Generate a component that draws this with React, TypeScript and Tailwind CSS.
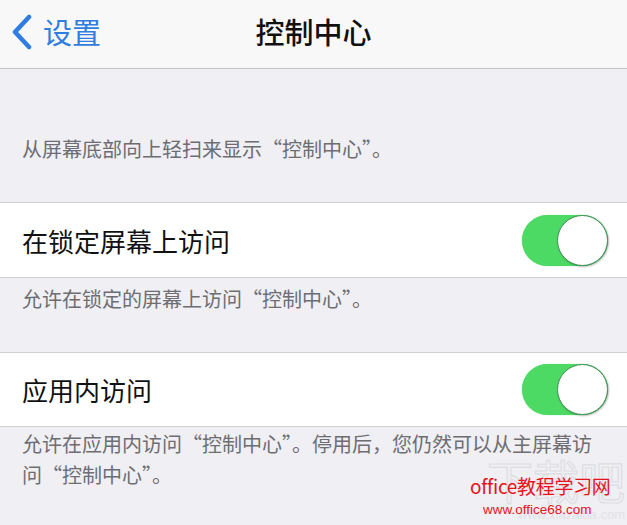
import React from "react";

const cjk = { fontFamily: '"Noto Sans CJK SC", "Noto Sans", sans-serif' };

function Toggle() {
  return (
    <div className="w-[86px] h-[51px] rounded-full bg-[#4cd964] flex items-center justify-end shadow-[0_0_1px_#4cd964]">
      <div className="w-[51px] h-[51px] rounded-full bg-white border-[1.5px] border-[#3f8f55] shadow-[1px_1px_2px_rgba(0,0,0,0.25)]" />
    </div>
  );
}

export default function App() {
  return (
    <div lang="zh-CN" style={cjk} className="relative w-[627px] h-[525px] overflow-hidden bg-[#efeff4]">
      {/* nav bar */}
      <div className="h-[69px] bg-[#f8f8f8] border-b border-[#c4c4c8] grid grid-cols-[1fr_auto_1fr] items-center">
        <div className="flex items-center pl-[10px] gap-[9px] text-[#2f7ddf]">
          <svg width="24" height="36" viewBox="0 0 24 36" className="mt-[-4px]">
            <path d="M19 3 L5 18 L19 33" fill="none" stroke="#2f7ddf" strokeWidth="4.5" strokeLinecap="round" strokeLinejoin="round" />
          </svg>
          <span className="text-[29px] leading-none mt-[-5px]">设置</span>
        </div>
        <div className="text-[29px] leading-none text-[#111] font-medium mt-[-6px]">控制中心</div>
        <div />
      </div>

      {/* section 1 header */}
      <div className="pt-[64px] pb-[37px] px-[22px] text-[20px] leading-[32px] text-[#6d6d72]">
        从屏幕底部向上轻扫来显示“控制中心”。
      </div>

      {/* row 1 */}
      <div className="bg-white border-y border-[#d0d0d4] h-[76px] flex items-center justify-between pl-[22px] pr-[19px]">
        <span className="text-[26px] text-[#111]">在锁定屏幕上访问</span>
        <Toggle />
      </div>

      <div className="pt-[5px] pb-[37px] px-[22px] text-[20px] leading-[32px] text-[#6d6d72]">
        允许在锁定的屏幕上访问“控制中心”。
      </div>

      {/* row 2 */}
      <div className="bg-white border-y border-[#d0d0d4] h-[75px] flex items-center justify-between pl-[22px] pr-[19px]">
        <span className="text-[26px] text-[#111]">应用内访问</span>
        <Toggle />
      </div>

      <div className="pt-[1px] px-[22px] pr-[19px] text-[20px] leading-[31px] text-[#6d6d72]">
        允许在应用内访问“控制中心”。停用后，您仍然可以从主屏幕访问“控制中心”。
      </div>

      {/* faint watermark */}
      <div className="absolute right-[2px] top-[456px] text-[46px] leading-none text-transparent [-webkit-text-stroke:1.2px_#dedee2] pointer-events-none">下载吧</div>
      <div className="absolute right-[2px] top-[508px] text-[13px] leading-none text-[#e2e2e6] pointer-events-none" style={{ fontFamily: '"Liberation Sans", sans-serif' }}>www.xiazaiba.com</div>

      {/* red watermark */}
      <div className="absolute left-[470px] top-[476px] text-[19px] leading-none text-[#e8141b] tracking-[-0.3px]">office教程学习网</div>
      <div className="absolute left-[483px] top-[503px] text-[13.5px] leading-none text-[#e8141b]" style={{ fontFamily: '"Liberation Sans", sans-serif' }}>www.office68.com</div>
    </div>
  );
}
